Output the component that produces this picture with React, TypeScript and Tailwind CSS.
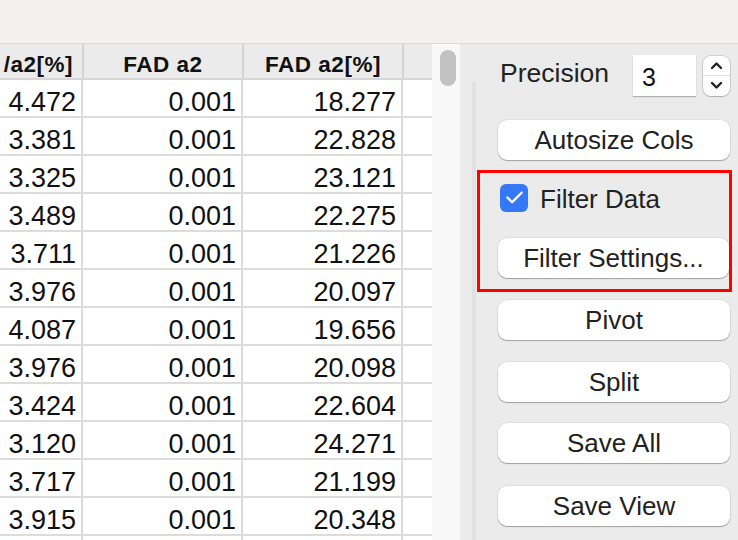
import { FaCheck } from "react-icons/fa6";

const rows = [
  ["4.472", "0.001", "18.277"],
  ["3.381", "0.001", "22.828"],
  ["3.325", "0.001", "23.121"],
  ["3.489", "0.001", "22.275"],
  ["3.711", "0.001", "21.226"],
  ["3.976", "0.001", "20.097"],
  ["4.087", "0.001", "19.656"],
  ["3.976", "0.001", "20.098"],
  ["3.424", "0.001", "22.604"],
  ["3.120", "0.001", "24.271"],
  ["3.717", "0.001", "21.199"],
  ["3.915", "0.001", "20.348"],
  ["", "", ""],
];

function PanelButton({ label, className }: { label: string; className?: string }) {
  return (
    <button
      className={
        "h-[40px] w-[232px] rounded-[9px] bg-white text-[26px] leading-[40px] text-[#222] shadow-[0_1px_1px_rgba(0,0,0,0.28),0_0_0_0.5px_rgba(0,0,0,0.1)] " +
        (className ?? "")
      }
    >
      {label}
    </button>
  );
}

function Table() {
  return (
    <div className="w-[432px] bg-white">
      <div className="flex h-[36px] border-b-2 border-[#d6d6d6] bg-[#ebebeb] text-[22.5px] font-bold leading-[30px] tracking-[0.5px] text-[#111]">
        <div className="flex w-[84px] justify-end overflow-hidden border-r-2 border-[#d3d3d3] pr-[9px] pt-[6px]">
          <span className="whitespace-nowrap">/a2[%]</span>
        </div>
        <div className="w-[160px] border-r-2 border-[#d3d3d3] pt-[6px] text-center">FAD a2</div>
        <div className="w-[160px] border-r-2 border-[#d3d3d3] pt-[6px] text-center">FAD a2[%]</div>
        <div className="flex-1" />
      </div>
      {rows.map((r, i) => (
        <div key={i} className="flex h-[38px] border-b-2 border-[#dcdcdc] text-[27px] leading-[30px] text-[#111]">
          <div className="w-[83px] border-r-2 border-[#dcdcdc] pr-[5px] pt-[7px] text-right">{r[0]}</div>
          <div className="w-[160px] border-r-2 border-[#dcdcdc] pr-[5px] pt-[7px] text-right">{r[1]}</div>
          <div className="w-[160px] border-r-2 border-[#dcdcdc] pr-[5px] pt-[7px] text-right">{r[2]}</div>
          <div className="flex-1" />
        </div>
      ))}
    </div>
  );
}

function Stepper() {
  return (
    <div className="ml-[7px] flex h-[40px] w-[27px] flex-col rounded-[8px] bg-white shadow-[0_0_0_1px_rgba(0,0,0,0.12),0_1px_1px_rgba(0,0,0,0.15)]">
      <div className="flex flex-1 items-center justify-center border-b border-[#dedede]">
        <svg width="13" height="9" viewBox="0 0 13 9" fill="none" stroke="#222" strokeWidth="2.4" strokeLinecap="round" strokeLinejoin="round">
          <path d="M2 7 L6.5 2.5 L11 7" />
        </svg>
      </div>
      <div className="flex flex-1 items-center justify-center">
        <svg width="13" height="9" viewBox="0 0 13 9" fill="none" stroke="#222" strokeWidth="2.4" strokeLinecap="round" strokeLinejoin="round">
          <path d="M2 2 L6.5 6.5 L11 2" />
        </svg>
      </div>
    </div>
  );
}

function Panel() {
  return (
    <div className="flex flex-1 bg-[#ebebeb]">
      <div className="ml-[12px] mt-[38px] w-[4px] bg-[#e2e2e2]" />
      <div className="flex flex-col pl-[22px] text-[#222]">
        <div className="mt-[11px] flex h-[41px] items-center">
          <span className="-mt-[5px] w-[135px] pl-[2px] text-[26.5px] leading-[30px]">Precision</span>
          <div className="h-[41px] w-[63px] bg-white pl-[9px] pt-[4px] text-[25px] leading-[36px] text-[#111] shadow-[0_1px_1px_rgba(0,0,0,0.25)]">
            3
          </div>
          <Stepper />
        </div>
        <PanelButton label="Autosize Cols" className="mt-[24px]" />
        <div className="-ml-[21px] mt-[10px] flex h-[122px] w-[255px] flex-col border-[3px] border-[#ff0000] pl-[18px]">
          <div className="mt-[10px] flex h-[29px] items-center">
            <div className="ml-[2px] flex h-[28px] w-[28px] items-center justify-center rounded-[6px] bg-[#3478f6] text-white">
              <FaCheck size={19} />
            </div>
            <span className="ml-[12px] pt-[3px] text-[26px] leading-[29px]">Filter Data</span>
          </div>
          <PanelButton label="Filter Settings..." className="mt-[26px] !w-[231px]" />
        </div>
        <PanelButton label="Pivot" className="mt-[8px]" />
        <PanelButton label="Split" className="mt-[22px]" />
        <PanelButton label="Save All" className="mt-[21px]" />
        <PanelButton label="Save View" className="mt-[23px]" />
      </div>
    </div>
  );
}

export default function App() {
  return (
    <div className="flex h-[540px] w-[738px] flex-col overflow-hidden font-['Liberation_Sans',Arial,sans-serif]">
      <div className="h-[44px] shrink-0 border-b border-[#dddbda] bg-[#f3f1f0]" />
      <div className="flex flex-1 overflow-hidden">
        <Table />
        <div className="w-[28px] bg-[#f8f8f8] pl-[8px] pt-[6px]">
          <div className="h-[36px] w-[16px] rounded-full bg-[#c2c2c2]" />
        </div>
        <Panel />
      </div>
    </div>
  );
}
